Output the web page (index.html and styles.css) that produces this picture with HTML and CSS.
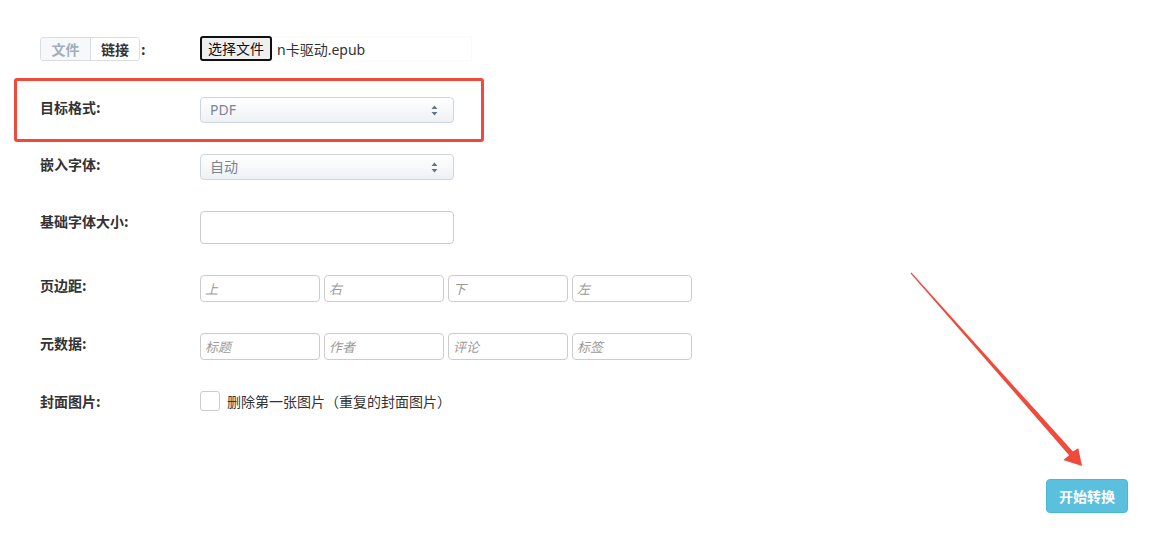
FILE: index.html
```html
<!DOCTYPE html>
<html lang="zh-CN">
<head>
<meta charset="utf-8">
<title>转换</title>
<link rel="stylesheet" href="styles.css">
</head>
<body>
<main class="page">
  <form class="form">
    <div class="row row-first">
      <div class="label">
        <div class="tabs">
          <span class="tab">文件</span>
          <span class="tab tab-active">链接</span>
        </div>
        <span class="colon">:</span>
      </div>
      <div class="control">
        <div class="file">
          <span class="file-btn">选择文件</span>
          <span class="file-name">n卡驱动.epub</span>
        </div>
      </div>
    </div>

    <div class="row">
      <div class="label">目标格式:</div>
      <div class="control">
        <div class="select">
          <span class="select-text">PDF</span>
          <svg class="select-arrows" width="7" height="11" viewBox="0 0 7 11"><path d="M3.5 0.5 L6.5 4 L0.5 4 Z M0.5 7 L6.5 7 L3.5 10.5 Z" fill="#687382"/></svg>
        </div>
      </div>
    </div>

    <div class="row">
      <div class="label">嵌入字体:</div>
      <div class="control">
        <div class="select">
          <span class="select-text">自动</span>
          <svg class="select-arrows" width="7" height="11" viewBox="0 0 7 11"><path d="M3.5 0.5 L6.5 4 L0.5 4 Z M0.5 7 L6.5 7 L3.5 10.5 Z" fill="#687382"/></svg>
        </div>
      </div>
    </div>

    <div class="row">
      <div class="label">基础字体大小:</div>
      <div class="control">
        <input class="input input-lg" type="text">
      </div>
    </div>

    <div class="row">
      <div class="label">页边距:</div>
      <div class="control">
        <div class="quad">
          <input class="input input-sm" type="text" placeholder="上">
          <input class="input input-sm" type="text" placeholder="右">
          <input class="input input-sm" type="text" placeholder="下">
          <input class="input input-sm" type="text" placeholder="左">
        </div>
      </div>
    </div>

    <div class="row">
      <div class="label">元数据:</div>
      <div class="control">
        <div class="quad">
          <input class="input input-sm" type="text" placeholder="标题">
          <input class="input input-sm" type="text" placeholder="作者">
          <input class="input input-sm" type="text" placeholder="评论">
          <input class="input input-sm" type="text" placeholder="标签">
        </div>
      </div>
    </div>

    <div class="row">
      <div class="label">封面图片:</div>
      <div class="control">
        <label class="check">
          <input class="check-box" type="checkbox">
          <span class="check-text">删除第一张图片（重复的封面图片）</span>
        </label>
      </div>
    </div>
  </form>

  <div class="actions">
    <button class="btn-convert" type="button">开始转换</button>
  </div>

  <div class="annot-box"></div>
  <svg class="annot-arrow" width="1152" height="541" viewBox="0 0 1152 541">
    <polygon points="911.4,272.6 1072.9,451.6 1078.3,448.3 1082,466 1063.3,460 1069.1,455.2 910.6,273.4" fill="#ef4a3c"/>
  </svg>
</main>
</body>
</html>
```

FILE: styles.css
```css
* { box-sizing: border-box; }

html, body {
  margin: 0;
  background: #ffffff;
}

body {
  font-family: "Noto Sans", "Noto Sans CJK SC", sans-serif;
  font-size: 14px;
  color: #333333;
  width: 1152px;
  height: 541px;
  overflow: hidden;
}

.page {
  position: relative;
  padding: 37px 24px 0 40px;
  height: 541px;
}

.form {
  display: flex;
  flex-direction: column;
  gap: 31px;
}

.row {
  display: grid;
  grid-template-columns: 160px 1fr;
  align-items: start;
}

.row-first {
  margin-bottom: 5px;
}

.label {
  font-weight: 700;
  font-size: 14px;
  line-height: 20px;
  color: #333333;
  font-family: "Noto Sans CJK SC", "Noto Sans", sans-serif;
}

.row-first .label {
  display: flex;
  align-items: center;
}

.tabs {
  display: inline-flex;
  border: 1px solid #d6dde5;
  border-radius: 3px;
  overflow: hidden;
}

.tab {
  display: block;
  width: 49px;
  height: 22px;
  line-height: 22px;
  text-align: center;
  font-size: 14px;
  font-weight: 700;
  color: #333333;
  background: #ffffff;
}

.tab + .tab {
  border-left: 1px solid #d6dde5;
}

.tab:first-child {
  color: #a3aebb;
  background: #f6f8fa;
}

.colon {
  margin-left: 1px;
  line-height: 20px;
}

.control {
  display: flex;
}

.file {
  display: flex;
  align-items: center;
  width: 272px;
  height: 25px;
  margin-top: -1px;
  border: 1px solid #fafafa;
  border-left: 0;
}

.file-btn {
  display: block;
  height: 25px;
  padding: 0 6px;
  line-height: 21px;
  border: 2px solid #111111;
  border-radius: 3px;
  background: #efefef;
  font-size: 14px;
  color: #111111;
  font-family: "Noto Sans CJK SC", sans-serif;
}

.file-name {
  margin-left: 5px;
  font-size: 14px;
  color: #333333;
  font-family: "Noto Sans", "Noto Sans CJK SC", sans-serif;
}

.select {
  display: flex;
  align-items: center;
  justify-content: space-between;
  width: 254px;
  height: 26px;
  padding: 0 15px 0 9px;
  border: 1px solid #cdd6df;
  border-radius: 4px;
  background: linear-gradient(#ffffff, #eef1f4);
  box-shadow: inset 0 1px 0 #ffffff;
}

.select-text {
  font-size: 14px;
  color: #7b8592;
  line-height: 20px;
}

.select-arrows {
  display: block;
}

.input {
  display: block;
  margin: 0;
  border: 1px solid #cccccc;
  border-radius: 4px;
  background: #ffffff;
  font-family: "Noto Sans CJK SC", sans-serif;
  color: #333333;
  outline: none;
}

.input-lg {
  width: 254px;
  height: 33px;
}

.quad {
  display: grid;
  grid-template-columns: repeat(4, 120px);
  column-gap: 4px;
}

.input-sm {
  width: 120px;
  height: 27px;
  padding: 0 4px;
  font-size: 13px;
  border-radius: 4px;
}

.input-sm::placeholder {
  color: #9a9a9a;
  font-style: italic;
}

.check {
  display: flex;
  align-items: center;
  height: 20px;
}

.check-box {
  appearance: none;
  -webkit-appearance: none;
  width: 20px;
  height: 20px;
  margin: 0;
  border: 1px solid #cccccc;
  border-radius: 3px;
  background: #ffffff;
}

.check-text {
  margin-left: 7px;
  font-size: 14px;
  color: #333333;
  font-family: "Noto Sans CJK SC", sans-serif;
}

.actions {
  display: flex;
  justify-content: flex-end;
  margin-top: 68px;
}

.btn-convert {
  height: 34px;
  padding: 0 12px;
  border: 1px solid #46b8da;
  border-radius: 4px;
  background: #5bc0de;
  color: #ffffff;
  font-family: "Noto Sans CJK SC", sans-serif;
  font-size: 14px;
  font-weight: 700;
  line-height: 20px;
}

.annot-box {
  position: absolute;
  left: 14px;
  top: 78px;
  width: 470px;
  height: 64px;
  border: 3px solid #ef4a3c;
  border-radius: 3px;
  pointer-events: none;
}

.annot-arrow {
  position: absolute;
  left: 0;
  top: 0;
  pointer-events: none;
}
```
